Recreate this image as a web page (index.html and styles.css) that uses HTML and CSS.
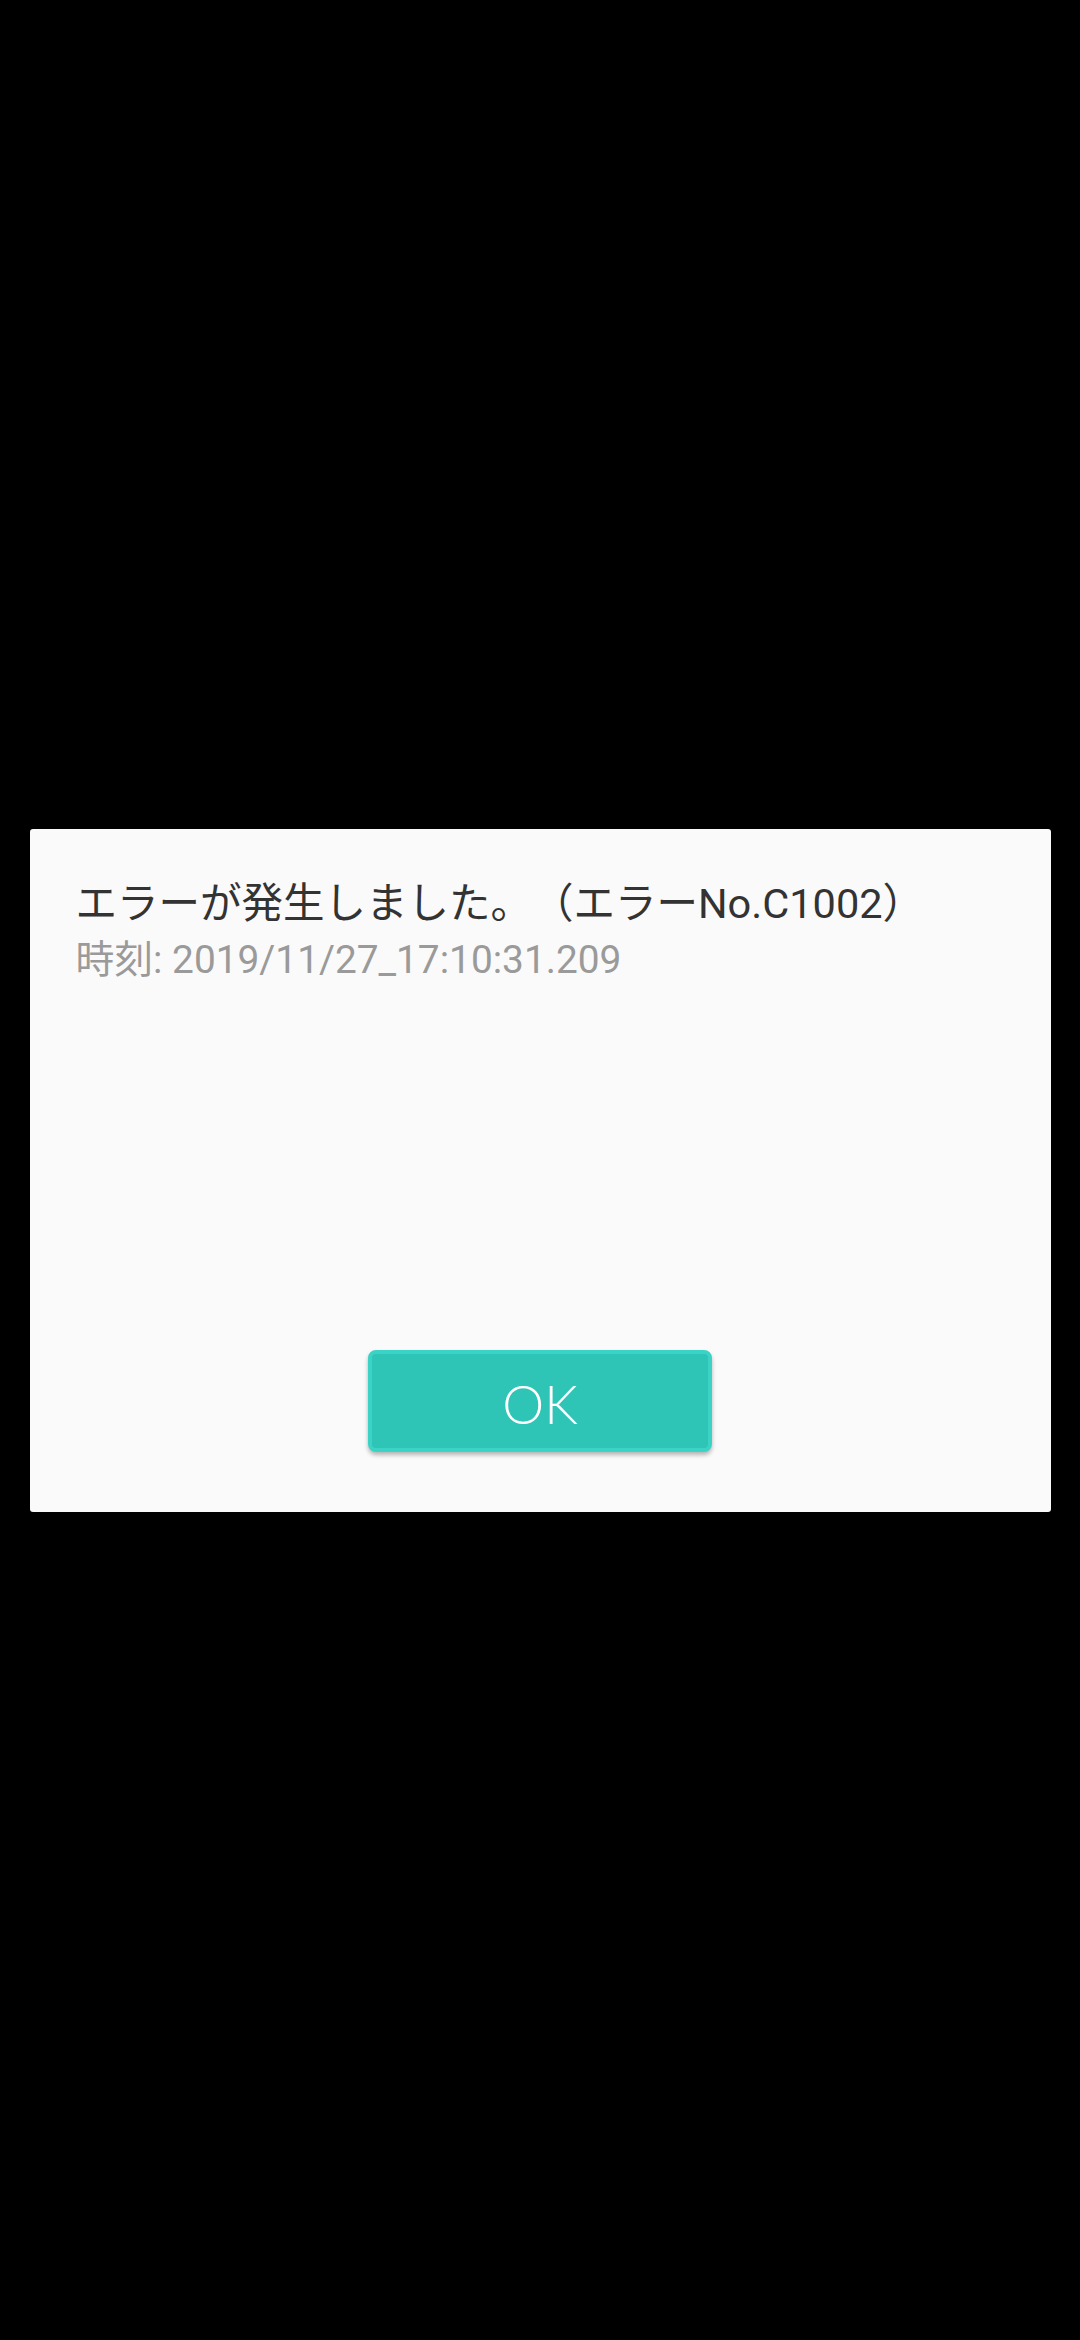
FILE: index.html
```html
<!DOCTYPE html>
<html lang="ja">
<head>
<meta charset="utf-8">
<link rel="stylesheet" href="styles.css">
</head>
<body>
<div class="screen">
  <div class="dialog">
    <div class="title">エラーが発生しました。（エラーNo.C1002）</div>
    <div class="time">時刻: 2019/11/27_17:10:31.209</div>
    <div class="spacer"></div>
    <div class="actions">
      <button class="ok">OK</button>
    </div>
  </div>
</div>
</body>
</html>
```

FILE: styles.css
```css
html, body {
  margin: 0;
  padding: 0;
  background: #000;
}
.screen {
  width: 1080px;
  height: 2340px;
  display: flex;
  align-items: center;
  justify-content: center;
}
.dialog {
  width: 1021px;
  height: 683px;
  background: #fafafa;
  border-radius: 3px;
  box-sizing: border-box;
  padding: 50px 46px 60px 46px;
  display: flex;
  flex-direction: column;
}
.title {
  font-family: Roboto, "Noto Sans CJK JP", sans-serif;
  font-size: 41.5px;
  line-height: 50px;
  color: #333333;
  white-space: nowrap;
  text-spacing-trim: space-all;
}
.time {
  margin-top: 8px;
  font-family: Roboto, "Noto Sans CJK JP", sans-serif;
  font-size: 38.8px;
  line-height: 46px;
  color: #9a9a9a;
  white-space: nowrap;
}
.spacer {
  flex: 1;
}
.actions {
  display: flex;
  justify-content: center;
}
.ok {
  width: 344px;
  height: 102px;
  box-sizing: border-box;
  background: #2ec4b6;
  border: 4px solid #3ad3c5;
  border-radius: 8px;
  box-shadow: 0 3px 4px rgba(0,0,0,0.28);
  color: #ffffff;
  font-family: "Lato", sans-serif;
  font-weight: 300;
  font-size: 53px;
  padding: 6px 0 0 0;
}
```
